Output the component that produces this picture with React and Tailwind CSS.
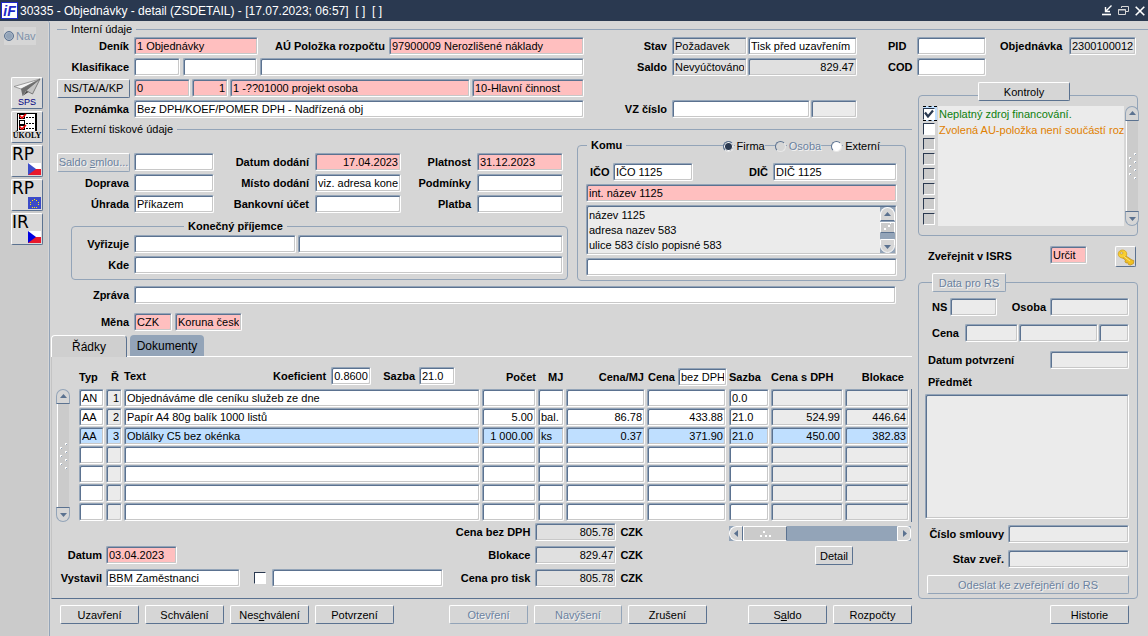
import React from "react";
import clsx from "clsx";

const TONES = {
  white: "bg-white",
  pink: "bg-[#ffbfbf]",
  gray: "bg-[#e0e0e0]",
  dim: "bg-[#ebebeb]",
  blue: "bg-[#bfdfff]",
};

const SUNKEN =
  "rounded-[2px] border border-t-[#93a4b8] border-l-[#93a4b8] border-r-white border-b-white shadow-[inset_1px_1px_0_#5b7290,inset_-1px_-1px_0_#c8c8c8]";

function Field({ id, label, value = "", tone = "white", right, className }) {
  return (
    <input
      id={id}
      type="text"
      aria-label={label}
      defaultValue={value}
      className={clsx(
        "block h-[18px] min-w-0 px-[2px] text-[11px] leading-[14px] text-black outline-none",
        SUNKEN,
        TONES[tone],
        right && "text-right",
        className
      )}
    />
  );
}

function Label({ htmlFor, className, children }) {
  return (
    <label htmlFor={htmlFor} className={clsx("shrink-0 whitespace-nowrap font-bold", className)}>
      {children}
    </label>
  );
}

function Button({ disabled, className, children, ...rest }) {
  return (
    <button
      type="button"
      disabled={disabled}
      className={clsx(
        "flex h-[19px] shrink-0 items-center justify-center whitespace-nowrap rounded-[2px] border border-t-white border-l-white bg-[#d6d6d6]",
        disabled
          ? "border-r-[#93a4b8] border-b-[#93a4b8] text-[#6b829f] [text-shadow:1px_1px_0_#f4f4f4]"
          : "border-r-[#5b7290] border-b-[#5b7290] text-black",
        className
      )}
      {...rest}
    >
      {children}
    </button>
  );
}

function SectionTitle({ children, className }) {
  return (
    <div className={clsx("flex h-[13px] items-center gap-1", className)}>
      <span className="h-px w-[10px] bg-[#93a4b8]" />
      <h2 className="leading-[13px]">{children}</h2>
      <span className="h-px flex-1 bg-[#93a4b8]" />
    </div>
  );
}

function Arrow({ dir }) {
  const d = { up: "M1 6 4.500 2 8 6Z", down: "M1 3h7L4.500 7Z", left: "M6 1v7L2 4.500Z", right: "M3 1v7l4-3.500Z" }[dir];
  return (
    <svg width="9" height="9" viewBox="0 0 9 9" aria-hidden="true">
      <path d={d} fill="#5b7290" />
    </svg>
  );
}

function Grip() {
  return (
    <svg width="10" height="28" viewBox="0 0 10 28" aria-hidden="true">
      {[[6, 1], [1, 5], [6, 9], [1, 13], [6, 17], [1, 21], [6, 25]].map(([x, y]) => (
        <g key={y}>
          <rect x={x} y={y} width="2" height="2" fill="#fff" />
          <rect x={x + 1} y={y + 1} width="1" height="1" fill="#93a4b8" />
        </g>
      ))}
    </svg>
  );
}

function VScroll({ className }) {
  return (
    <div className={clsx("flex w-[14px] shrink-0 flex-col", className)}>
      <button type="button" aria-label="Nahoru" className="flex h-[15px] items-center justify-center rounded-t-full border border-[#93a4b8] border-b-[#5b7290] bg-[#d6d6d6]">
        <Arrow dir="up" />
      </button>
      <div className="mx-px flex flex-1 items-center justify-center border-l border-white bg-[#cbcbcb]">
        <Grip />
      </div>
      <button type="button" aria-label="Dolů" className="flex h-[15px] items-center justify-center rounded-b-full border border-[#93a4b8] border-t-[#5b7290] bg-[#d6d6d6]">
        <Arrow dir="down" />
      </button>
    </div>
  );
}

function Radio({ label, checked, disabled }) {
  return (
    <label className={clsx("flex items-center gap-px", disabled && "text-[#6b829f] [text-shadow:1px_1px_0_#f4f4f4]")}>
      <input
        type="radio"
        name="komu"
        defaultChecked={checked}
        disabled={disabled}
        className="size-[11px] appearance-none rounded-full border border-t-[#5b7290] border-l-[#5b7290] border-r-[#e8e8e8] border-b-[#e8e8e8] bg-white checked:bg-[#2a3950] checked:shadow-[inset_0_0_0_1px_#fff] disabled:bg-[#d6d6d6]"
      />
      <span className="bg-[#d6d6d6] pl-[2px]">{label}</span>
    </label>
  );
}

function Check({ label, checked, dim, focus }) {
  return (
    <span className={clsx("relative flex h-[15px] w-[14px] items-center", focus && "border-y border-dashed border-black bg-[#bfdfff]")}>
      <input
        type="checkbox"
        aria-label={label}
        defaultChecked={checked}
        className={clsx(
          "peer size-3 appearance-none border border-t-[#2a3950] border-l-[#2a3950] border-r-white border-b-white",
          dim ? "bg-[#cbcbcb]" : "bg-white"
        )}
      />
      <svg width="10" height="9" viewBox="0 0 10 9" className="pointer-events-none absolute left-px hidden peer-checked:block" aria-hidden="true">
        <path d="M1 3.500 4 7.500 9 1.500" fill="none" stroke="#2a3950" strokeWidth="2.200" />
      </svg>
    </span>
  );
}

function Plane() {
  return (
    <svg width="28" height="19" viewBox="0 0 28 19" aria-hidden="true">
      <path d="M27 1 1 8.500l7 2.500Z" fill="#f4f4f4" stroke="#888" strokeWidth=".8" />
      <path d="M27 1 8 11l1.500 7 3.500-5Z" fill="#6e6e6e" />
      <path d="M27 1 13 12.500l6.500 3.500Z" fill="#c4c4c4" stroke="#666" strokeWidth=".8" />
      <path d="M9.500 18l4-5 2 1Z" fill="#444" />
    </svg>
  );
}

function Tasks() {
  return (
    <svg width="22" height="19" viewBox="0 0 22 19" aria-hidden="true">
      <rect x="1" y="1" width="19" height="18" fill="#fff" />
      <path d="M20 1v18" stroke="#000" strokeWidth="2" />
      <path d="M1 1.500h20M1.500 1v18" stroke="#000" />
      {[2, 8, 13].map((y, i) => (
        <g key={y}>
          <rect x="3.500" y={y + 0.5} width="5" height="4" fill="#fff" stroke="#000" />
          <path d={`M10 ${y + 3.5}h8`} stroke="#000" strokeDasharray="2 1" />
          {i !== 1 && <path d={`M3.500 ${y + 1.5}l2.500 2.500 4-4`} fill="none" stroke="#e00" strokeWidth="1.600" />}
        </g>
      ))}
    </svg>
  );
}

function CzFlag({ blue }) {
  return (
    <svg width="13" height="12" viewBox="0 0 13 12" className="block" aria-hidden="true">
      <rect width="13" height="6" fill="#fff" />
      <rect y="6" width="13" height="6" fill="#e8192c" />
      <path d="M0 0 8 6 0 12Z" fill={blue} />
    </svg>
  );
}

function EuFlag() {
  const stars = [[6, 2], [8, 3], [10, 5], [10, 7], [8, 10], [6, 10], [4, 10], [2, 7], [2, 5], [4, 3]];
  return (
    <svg width="13" height="12" viewBox="0 0 13 12" className="block" aria-hidden="true">
      <rect width="13" height="12" fill="#3b4bc8" />
      {stars.map(([x, y]) => (
        <rect key={`${x}-${y}`} x={x} y={y} width="1" height="1" fill="#ffe600" />
      ))}
    </svg>
  );
}

function ToolButton({ label, className, children }) {
  return (
    <button
      type="button"
      aria-label={label}
      className={clsx("flex size-8 flex-col overflow-hidden rounded-[2px] border border-t-white border-l-white border-r-[#5b7290] border-b-[#5b7290] bg-[#d9d9d9]", className)}
    >
      {children}
    </button>
  );
}

function Sidebar() {
  return (
    <nav className="flex w-[50px] shrink-0 flex-col rounded-tr-[3px] border-r border-[#93a4b8] bg-[#cbcbcb] shadow-[inset_-1px_0_0_#d6d6d6]">
      <label className="mt-[6px] ml-1 flex h-[18px] w-8 items-center gap-[2px] bg-[#d6d6d6] text-[#7f93ab]">
        <input type="radio" name="nav" disabled className="size-[10px] appearance-none rounded-full border border-[#5b7290] bg-[#93a4b8] shadow-[inset_0_0_0_1px_#a9b6c6]" />
        Nav
      </label>
      <div className="mt-8 ml-[11px] flex flex-col gap-[2px]">
        <ToolButton label="SPS" className="items-center">
          <Plane />
          <span className="text-[9px] leading-[10px] text-[#000080]">SPS</span>
        </ToolButton>
        <ToolButton label="Úkoly" className="items-center">
          <Tasks />
          <span className="font-['Liberation_Serif',serif] text-[8px] leading-[10px] font-bold">ÚKOLY</span>
        </ToolButton>
        <ToolButton label="RP CZ" className="items-start">
          <span className="font-['DejaVu_Sans',sans-serif] text-[17px] leading-[17px]">RP</span>
          <span className="self-end pr-px"><CzFlag blue="#3b4bc8" /></span>
        </ToolButton>
        <ToolButton label="RP EU" className="items-start">
          <span className="font-['DejaVu_Sans',sans-serif] text-[17px] leading-[17px]">RP</span>
          <span className="self-end pr-px"><EuFlag /></span>
        </ToolButton>
        <ToolButton label="IR CZ" className="items-start">
          <span className="font-['DejaVu_Sans',sans-serif] text-[17px] leading-[17px]">IR</span>
          <span className="self-end pr-px"><CzFlag blue="#0000e0" /></span>
        </ToolButton>
      </div>
    </nav>
  );
}

function TitleBar() {
  return (
    <header className="flex h-[21px] items-center bg-[#2a3950] pr-[3px] text-white">
      <span className="ml-px flex size-[17px] items-center justify-center border border-[#1e28c8] bg-white text-[14px] leading-none font-bold text-[#1e28c8] italic">
        iF
      </span>
      <h1 className="ml-[2px] flex-1 text-[12px]">
        30335 - Objednávky - detail (ZSDETAIL) - [17.07.2023; 06:57]&nbsp; [ ]&nbsp; [ ]
      </h1>
      <div className="flex items-center gap-[6px]">
        <button type="button" aria-label="Minimalizovat">
          <svg width="10" height="11" viewBox="0 0 10 11" className="block" fill="none" stroke="#fff">
            <path d="M9.500.5 4 6M3.500 2v4.500H8" strokeWidth="1.400" />
            <path d="M0 9.500h9" strokeWidth="1.600" />
          </svg>
        </button>
        <button type="button" aria-label="Obnovit">
          <svg width="11" height="11" viewBox="0 0 11 11" className="block" fill="none" stroke="#d6d6d6">
            <path d="M3.500 3V1.500h7v5H8" />
            <path d="M.5 4.500h7v5h-7z" />
            <path d="M0 5h8" />
          </svg>
        </button>
        <button type="button" aria-label="Zavřít">
          <svg width="10" height="10" viewBox="0 0 10 10" className="block" fill="none" stroke="#fff" strokeWidth="1.600">
            <path d="M.7.7l8.600 8.600M9.300.7.7 9.300" />
          </svg>
        </button>
      </div>
    </header>
  );
}

function InternalTop() {
  return (
    <div className="mt-px flex flex-col gap-[3px] pr-3 pl-[7px]">
      <div className="flex items-center">
        <Label htmlFor="denik" className="mr-[5px] w-[72px] text-right">Deník</Label>
        <div className="flex flex-1 items-center">
          <Field id="denik" tone="pink" value="1 Objednávky" className="w-[124px]" />
          <Label htmlFor="polozka" className="w-[131px] pr-1 text-right">AÚ Položka rozpočtu</Label>
          <Field id="polozka" tone="pink" value="97900009 Nerozlišené náklady" className="flex-1" />
        </div>
        <Label htmlFor="stav" className="w-[88px] pr-[5px] text-right">Stav</Label>
        <Field id="stav" tone="gray" value="Požadavek" className="w-[75px]" />
        <Field label="Stav tisku" value="Tisk před uzavřením" className="ml-px w-[109px]" />
        <Label htmlFor="pid" className="ml-[31px] w-[29px]">PID</Label>
        <Field id="pid" className="w-[69px]" />
        <Label htmlFor="obj" className="ml-[14px] w-[69px]">Objednávka</Label>
        <Field id="obj" tone="gray" value="2300100012" className="w-[67px]" />
      </div>
      <div className="flex items-center">
        <Label htmlFor="klas" className="mr-[5px] w-[72px] text-right">Klasifikace</Label>
        <div className="flex flex-1 gap-[3px]">
          <Field id="klas" className="w-[46px]" />
          <Field label="Klasifikace 2" className="w-[74px]" />
          <Field label="Klasifikace 3" className="flex-1" />
        </div>
        <Label htmlFor="saldo" className="w-[88px] pr-[5px] text-right">Saldo</Label>
        <Field id="saldo" tone="gray" value="Nevyúčtováno" className="w-[75px]" />
        <Field label="Částka salda" tone="gray" right value="829.47" className="ml-px w-[109px]" />
        <Label htmlFor="cod" className="ml-[31px] w-[29px]">COD</Label>
        <Field id="cod" className="mr-[150px] w-[69px]" />
      </div>
    </div>
  );
}

function InternalBottom() {
  return (
    <div className="flex flex-col gap-[3px] pl-[7px]">
      <div className="flex h-[18px] items-center">
        <Button className="mr-1 w-[73px]">NS/TA/A/KP</Button>
        <div className="flex flex-1 gap-[2px]">
          <Field label="NS" tone="pink" value="0" className="w-[56px]" />
          <Field label="TA" tone="pink" value="1" right className="w-[36px]" />
          <Field label="Akce" tone="pink" value="1 -??01000 projekt osoba" className="flex-1" />
          <Field label="KP" tone="pink" value="10-Hlavní činnost" className="w-[112px]" />
        </div>
        <div className="w-[328px]" />
      </div>
      <div className="flex items-center">
        <Label htmlFor="pozn" className="mr-[5px] w-[72px] text-right">Poznámka</Label>
        <Field id="pozn" value="Bez DPH/KOEF/POMER DPH - Nadřízená obj" className="flex-1" />
        <Label htmlFor="vz" className="w-[88px] pr-[5px] text-right">VZ číslo</Label>
        <Field id="vz" className="w-[138px]" />
        <Field label="VZ typ" tone="dim" className="mr-[55px] ml-px w-[46px]" />
      </div>
    </div>
  );
}

function ExtRow({ lead, a, b, c }) {
  return (
    <div className="flex h-[18px] items-center pr-[5px]">
      {lead}
      <Field id={a.id} label={a.label} value={a.value} className="w-[80px]" />
      <Label htmlFor={b.id} className="w-[101px] flex-1 pr-[6px] text-right">{b.text}</Label>
      <Field id={b.id} value={b.value} tone={b.tone} right={b.right} className="w-[86px]" />
      <Label htmlFor={c.id} className="w-[76px] pr-[6px] text-right">{c.text}</Label>
      <Field id={c.id} value={c.value} tone={c.tone} className="w-[86px]" />
    </div>
  );
}

function External() {
  return (
    <div className="mt-[3px] flex items-start gap-[9px] pr-[6px] pl-[7px]">
      <div className="min-w-0 flex-1 pt-[14px]">
        <div className="flex flex-col gap-[3px]">
          <ExtRow
            lead={<Button disabled className="mr-1 w-[73px]"><span>Saldo <u>s</u>mlou...</span></Button>}
            a={{ label: "Saldo smlouvy" }}
            b={{ id: "dodani", text: "Datum dodání", value: "17.04.2023", tone: "pink", right: true }}
            c={{ id: "platnost", text: "Platnost", value: "31.12.2023", tone: "pink" }}
          />
          <ExtRow
            lead={<Label htmlFor="doprava" className="mr-[5px] w-[72px] text-right">Doprava</Label>}
            a={{ id: "doprava" }}
            b={{ id: "misto", text: "Místo dodání", value: "viz. adresa konečného příjemce" }}
            c={{ id: "podminky", text: "Podmínky" }}
          />
          <ExtRow
            lead={<Label htmlFor="uhrada" className="mr-[5px] w-[72px] text-right">Úhrada</Label>}
            a={{ id: "uhrada", value: "Příkazem" }}
            b={{ id: "ucet", text: "Bankovní účet" }}
            c={{ id: "platba", text: "Platba" }}
          />
        </div>
        <fieldset className="mt-[7px] ml-[14px] min-w-0 rounded-[4px] border border-[#93a4b8] pr-1 pb-[5px]">
          <legend className="ml-[112px] px-1 leading-[13px] font-bold">Konečný příjemce</legend>
          <div className="flex flex-col gap-[3px] pt-[2px]">
            <div className="flex items-center">
              <Label htmlFor="vyrizuje" className="mr-[5px] w-[57px] text-right">Vyřizuje</Label>
              <Field id="vyrizuje" className="w-[162px]" />
              <Field label="Vyřizuje jméno" className="ml-[2px] flex-1" />
            </div>
            <div className="flex items-center">
              <Label htmlFor="kde" className="mr-[5px] w-[57px] text-right">Kde</Label>
              <Field id="kde" className="flex-1" />
            </div>
          </div>
        </fieldset>
      </div>

      <fieldset className="relative w-[329px] min-w-0 rounded-[4px] border border-[#93a4b8] px-2 pb-1">
        <legend className="ml-[1px] px-1 leading-[13px] font-bold">Komu</legend>
        <div className="absolute -top-3 right-[25px] flex h-[13px] items-center gap-[10px] leading-[13px]">
          <Radio label="Firma" checked />
          <Radio label="Osoba" disabled />
          <Radio label="Externí" />
        </div>
        <div className="flex flex-col gap-[3px] pt-[11px]">
          <div className="flex items-center pl-1">
            <Label htmlFor="ico" className="w-[23px]">IČO</Label>
            <Field id="ico" value="IČO 1125" className="w-[80px]" />
            <Label htmlFor="dic" className="flex-1 pr-[5px] text-right">DIČ</Label>
            <Field id="dic" value="DIČ 1125" className="w-[124px]" />
          </div>
          <Field label="Interní název" tone="pink" value="int. název 1125" />
          <div className={clsx("flex h-[50px] bg-[#ebebeb] p-px", SUNKEN)}>
            <textarea
              aria-label="Adresa"
              defaultValue={"název 1125\nadresa nazev 583\nulice 583 číslo popisné 583"}
              className="block min-w-0 flex-1 resize-none overflow-hidden px-px pt-px text-[11px] leading-[15px] outline-none"
            />
            <div className="flex w-[15px] flex-col bg-[#93a4b8]">
              <button type="button" aria-label="Nahoru" className="flex h-[14px] items-center justify-center rounded-t-full border border-white border-b-[#5b7290] bg-[#d6d6d6]">
                <Arrow dir="up" />
              </button>
              <div className="mt-px h-[11px] border border-white border-b-[#5b7290] bg-[#cbcbcb]">
                <svg width="13" height="9" viewBox="0 0 13 9" className="block" aria-hidden="true">
                  <path d="M3 5h2v2H3zM7 2h2v2H7zM9 0h1v1H9z" fill="#fff" />
                </svg>
              </div>
              <div className="flex-1" />
              <button type="button" aria-label="Dolů" className="flex h-[14px] items-center justify-center rounded-b-full border border-white bg-[#d6d6d6]">
                <Arrow dir="down" />
              </button>
            </div>
          </div>
          <Field label="Doplnění adresy" />
        </div>
      </fieldset>
    </div>
  );
}

const ROWS = [
  ["AN", "1", "Objednáváme dle ceníku služeb ze dne", "", "", "", "", "0.0", "", ""],
  ["AA", "2", "Papír A4 80g balík 1000 listů", "5.00", "bal.", "86.78", "433.88", "21.0", "524.99", "446.64"],
  ["AA", "3", "Oblálky C5 bez okénka", "1 000.00", "ks", "0.37", "371.90", "21.0", "450.00", "382.83"],
  Array(10).fill(""),
  Array(10).fill(""),
  Array(10).fill(""),
  Array(10).fill(""),
];
const COLS = ["Typ", "Ř", "Text", "Počet", "MJ", "Cena/MJ", "Cena", "Sazba", "Cena s DPH", "Blokace"];
const RIGHT = [1, 3, 5, 6, 8, 9];
const DIM = [1, 8, 9];

function Lines() {
  return (
    <div className="flex pl-1">
      <VScroll className="mt-[22px] mr-[9px]" />
      <table className="w-full flex-1 table-fixed border-separate border-spacing-0">
        <colgroup>
          <col className="w-[27px]" />
          <col className="w-[18px]" />
          <col />
          <col className="w-[56px]" />
          <col className="w-[28px]" />
          <col className="w-[81px]" />
          <col className="w-[82px]" />
          <col className="w-[42px]" />
          <col className="w-[74px]" />
          <col className="w-[66px]" />
        </colgroup>
        <thead>
          <tr className="h-[22px] text-left whitespace-nowrap">
            <th className="p-0 pb-[2px]">Typ</th>
            <th className="p-0 pb-[2px] pl-[5px]">Ř</th>
            <th className="p-0">
              <div className="flex items-center pr-[27px] pb-1">
                <span className="flex-1">Text</span>
                <Label htmlFor="koef" className="mr-[5px]">Koeficient</Label>
                <Field id="koef" value="0.8600" className="w-[40px] font-normal" />
                <Label htmlFor="sazba" className="mr-1 ml-3">Sazba</Label>
                <Field id="sazba" value="21.0" className="w-[36px] font-normal" />
              </div>
            </th>
            <th className="p-0 pr-[2px] pb-[2px] text-right">Počet</th>
            <th className="p-0 pb-[2px] pl-[10px]">MJ</th>
            <th className="p-0 pr-[3px] pb-[2px] text-right">Cena/MJ</th>
            <th className="p-0">
              <div className="flex items-center justify-between pr-[2px] pb-[2px] pl-px">
                <span>Cena</span>
                <Field label="Typ ceny" value="bez DPH" className="w-[49px] font-normal" />
              </div>
            </th>
            <th className="p-0 pb-[2px]">Sazba</th>
            <th className="p-0 pb-[2px]">Cena s DPH</th>
            <th className="p-0 pr-[7px] pb-[2px] text-right">Blokace</th>
          </tr>
        </thead>
        <tbody>
          {ROWS.map((row, r) => (
            <tr key={r}>
              {row.map((cell, c) => (
                <td key={c} className={clsx("h-[19px] p-0 pb-px", c === 6 ? "pr-[3px]" : "pr-[2px]")}>
                  <Field
                    label={`${COLS[c]} ${r + 1}`}
                    value={cell}
                    right={RIGHT.includes(c)}
                    tone={r === 2 ? "blue" : DIM.includes(c) ? "dim" : "white"}
                    className="w-full"
                  />
                </td>
              ))}
            </tr>
          ))}
        </tbody>
      </table>
      <div className="mt-[22px] w-px bg-[#5b7290]" />
    </div>
  );
}

function Total({ id, label, value }) {
  return (
    <div className="flex items-center">
      <Label htmlFor={id} className="w-[87px] pr-[5px] text-right">{label}</Label>
      <Field id={id} tone="gray" right value={value} className="w-[81px]" />
      <span className="pl-1 font-bold">CZK</span>
    </div>
  );
}

function Summary() {
  return (
    <div className="mt-px flex pb-[11px]">
      <div className="flex flex-1 flex-col justify-end gap-[5px]">
        <div className="flex items-center">
          <Label htmlFor="datum" className="w-[54px] pr-1 text-right">Datum</Label>
          <Field id="datum" tone="pink" value="03.04.2023" className="w-[71px]" />
        </div>
        <div className="flex items-center">
          <Label htmlFor="vystavil" className="w-[54px] pr-1 text-right">Vystavil</Label>
          <Field id="vystavil" value="BBM Zaměstnanci" className="w-[134px]" />
          <span className="ml-[14px]"><Check label="Jiný vystavitel" /></span>
          <Field label="Jméno vystavitele" className="ml-1 flex-1" />
        </div>
      </div>
      <div className="ml-[5px] flex flex-col gap-[5px]">
        <Total id="bezdph" label="Cena bez DPH" value="805.78" />
        <Total id="blokace" label="Blokace" value="829.47" />
        <Total id="protisk" label="Cena pro tisk" value="805.78" />
      </div>
      <div className="ml-[86px] w-[183px] pt-[3px] pr-px">
        <div className="flex h-[15px] bg-[#93a4b8]">
          <button type="button" aria-label="Vlevo" className="flex w-[14px] items-center justify-center rounded-l-full border border-white border-r-[#5b7290] bg-[#d6d6d6]">
            <Arrow dir="left" />
          </button>
          <div className="flex w-[44px] items-center justify-center border border-white border-r-[#5b7290] bg-[#cbcbcb]">
            <svg width="12" height="8" viewBox="0 0 12 8" className="block" aria-hidden="true">
              <path d="M1 5h2v2H1zM4 1h2v2H4zM6 5h2v2H6zM10 5h2v2h-2z" fill="#fff" />
            </svg>
          </div>
          <div className="flex-1" />
          <button type="button" aria-label="Vpravo" className="flex w-[14px] items-center justify-center rounded-r-[4px] border border-white bg-[#d6d6d6]">
            <Arrow dir="right" />
          </button>
        </div>
        <Button className="mt-[5px] ml-[86px] w-[38px]">Detail</Button>
      </div>
    </div>
  );
}

function TabPanel() {
  return (
    <section className="mt-1 ml-px">
      <div role="tablist" className="flex h-[22px] text-[12px]">
        <button type="button" role="tab" aria-selected="true" className="w-[76px] rounded-t-[4px] border border-b-0 border-t-white border-l-white border-r-[#5b7290] bg-[#cfcfcf]">
          Řádky
        </button>
        <span className="w-[3px] border-b border-white" />
        <button type="button" role="tab" aria-selected="false" className="w-[74px] rounded-t-[4px] border-b border-white bg-[#93a4b8]">
          Dokumenty
        </button>
        <span className="flex-1 border-b border-white" />
      </div>
      <div className="border-b border-l border-b-[#5b7290] border-l-[#c4c4c4] pt-[10px]">
        <Lines />
        <Summary />
      </div>
    </section>
  );
}

function Checks() {
  return (
    <div className="relative mt-4 flex rounded-[4px] border border-[#93a4b8] pt-[10px] pb-[9px] pl-1">
      <div className="absolute inset-x-0 -top-[14px] flex justify-center pr-2">
        <Button className="w-[92px]">Kontroly</Button>
      </div>
      <div className="flex w-[15px] flex-col">
        {Array.from({ length: 8 }, (_, i) => (
          <Check key={i} label={`Kontrola ${i + 1}`} checked={i === 0} focus={i === 0} dim={i > 1} />
        ))}
      </div>
      <ul className="min-w-0 flex-1 overflow-hidden bg-[#ebebeb] leading-[16px] whitespace-nowrap">
        <li className="pl-px text-[#0d800d]">Neplatný zdroj financování.</li>
        <li className="pl-px text-[#e08000]">Zvolená AU-položka není součástí roz</li>
      </ul>
      <VScroll className="-mr-[2px] ml-px" />
    </div>
  );
}

function RegisterPanel() {
  return (
    <div className="relative mt-[15px] flex flex-1 flex-col rounded-[4px] border border-[#93a4b8] pt-[15px] pr-2 pb-1 pl-[6px]">
      <div className="absolute -top-[10px] left-[13px]">
        <Button disabled className="w-[74px]">Data pro RS</Button>
      </div>
      <div className="flex items-center pl-[7px]">
        <Label htmlFor="rsns" className="w-[18px]">NS</Label>
        <Field id="rsns" tone="dim" className="w-[47px]" />
        <Label htmlFor="osoba" className="flex-1 pr-1 text-right">Osoba</Label>
        <Field id="osoba" tone="dim" className="w-[79px]" />
      </div>
      <div className="mt-2 flex items-center pl-[7px]">
        <Label htmlFor="rscena" className="w-[33px]">Cena</Label>
        <div className="flex min-w-0 flex-1 gap-px">
          <Field id="rscena" tone="dim" className="w-[53px]" />
          <Field label="Cena 2" tone="dim" className="flex-1" />
          <Field label="Cena 3" tone="dim" className="w-[30px]" />
        </div>
      </div>
      <div className="mt-[9px] flex items-center pl-[3px]">
        <Label htmlFor="potvrzeni" className="flex-1">Datum potvrzení</Label>
        <Field id="potvrzeni" tone="dim" className="w-[79px]" />
      </div>
      <Label htmlFor="predmet" className="mt-[7px] pl-[3px] leading-[13px]">Předmět</Label>
      <textarea id="predmet" className={clsx("mt-[5px] block min-h-[124px] w-full flex-1 resize-none bg-[#ebebeb] text-[11px] outline-none", SUNKEN)} />
      <div className="mt-[6px] flex items-center">
        <Label htmlFor="smlouva" className="flex-1 pr-1 text-right">Číslo smlouvy</Label>
        <Field id="smlouva" tone="dim" className="w-[121px]" />
      </div>
      <div className="mt-[7px] flex items-center">
        <Label htmlFor="stavzv" className="flex-1 pr-1 text-right">Stav zveř.</Label>
        <Field id="stavzv" tone="dim" className="w-[121px]" />
      </div>
      <Button disabled className="mt-[7px] ml-[2px]">Odeslat ke zveřejnění do RS</Button>
    </div>
  );
}

function Aside() {
  return (
    <aside className="flex w-[236px] shrink-0 flex-col pr-[10px] pl-[6px]">
      <Checks />
      <div className="mt-[10px] flex pl-[10px]">
        <Label htmlFor="isrs" className="w-[122px] pt-[3px]">Zveřejnit v ISRS</Label>
        <Field id="isrs" tone="pink" value="Určit" className="w-[37px]" />
        <button type="button" aria-label="Klíč" className="ml-7 flex size-[21px] items-center justify-center rounded-[2px] border border-t-white border-l-white border-r-[#5b7290] border-b-[#5b7290] bg-[#d9d9d9]">
          <svg width="18" height="18" viewBox="0 0 18 18" aria-hidden="true">
            <path d="M7.500 7 15 12l1.800.5-.3 3-3 1.500-2-.5-1-2-1.500.5-1-1.500.5-1.500L5 9.500Z" fill="#f0c020" stroke="#c09020" strokeWidth=".8" />
            <ellipse cx="5.500" cy="6" rx="4.300" ry="4" fill="#f8cf30" stroke="#d0a020" strokeWidth=".8" />
            <ellipse cx="4.500" cy="5" rx="1.500" ry="1.100" fill="#d6d6d6" stroke="#c09020" strokeWidth=".6" />
            <path d="M7 8.500 13 13" stroke="#ffe680" strokeWidth="1" />
          </svg>
        </button>
      </div>
      <RegisterPanel />
    </aside>
  );
}

function Footer() {
  return (
    <footer className="flex items-center gap-[6px] pt-[6px] pr-[19px] pb-3 pl-[10px]">
      <Button className="w-[79px]">Uzavření</Button>
      <Button className="w-[79px]">Schválení</Button>
      <Button className="w-[79px]"><span>Nes<u>c</u>hválení</span></Button>
      <Button className="w-[79px]">Potvrzení</Button>
      <div className="flex flex-1 justify-end gap-[6px]">
        <Button disabled className="w-[79px]">Otevření</Button>
        <Button disabled className="w-[88px]">Navýšení</Button>
        <Button className="w-[79px]">Zrušení</Button>
      </div>
      <Button className="ml-[35px] w-[79px]"><span>S<u>a</u>ldo</span></Button>
      <Button className="w-[79px]">Rozpočty</Button>
      <Button className="ml-[132px] w-[79px]">Historie</Button>
    </footer>
  );
}

export default function App() {
  return (
    <div className="flex min-h-screen flex-col bg-[#d6d6d6] font-['Liberation_Sans',Arial,sans-serif] text-[11px] leading-[14px] text-black">
      <TitleBar />
      <div className="flex flex-1">
        <Sidebar />
        <main className="min-w-0 flex-1 pt-[2px]">
          <SectionTitle className="pl-[7px]">Interní údaje</SectionTitle>
          <InternalTop />
          <div className="mt-[3px] flex">
            <div className="min-w-0 flex-1">
              <InternalBottom />
              <SectionTitle className="mt-[5px] pl-[7px]">Externí tiskové údaje</SectionTitle>
              <External />
              <div className="mt-[5px] flex items-center pr-4 pl-[7px]">
                <Label htmlFor="zprava" className="mr-[5px] w-[72px] text-right">Zpráva</Label>
                <Field id="zprava" className="flex-1" />
              </div>
              <div className="mt-[9px] flex items-center pl-[7px]">
                <Label htmlFor="mena" className="mr-[5px] w-[72px] text-right">Měna</Label>
                <Field id="mena" tone="pink" value="CZK" className="w-[38px]" />
                <Field label="Název měny" tone="pink" value="Koruna česká" className="ml-[3px] w-[67px]" />
              </div>
              <TabPanel />
            </div>
            <Aside />
          </div>
          <Footer />
        </main>
      </div>
    </div>
  );
}
